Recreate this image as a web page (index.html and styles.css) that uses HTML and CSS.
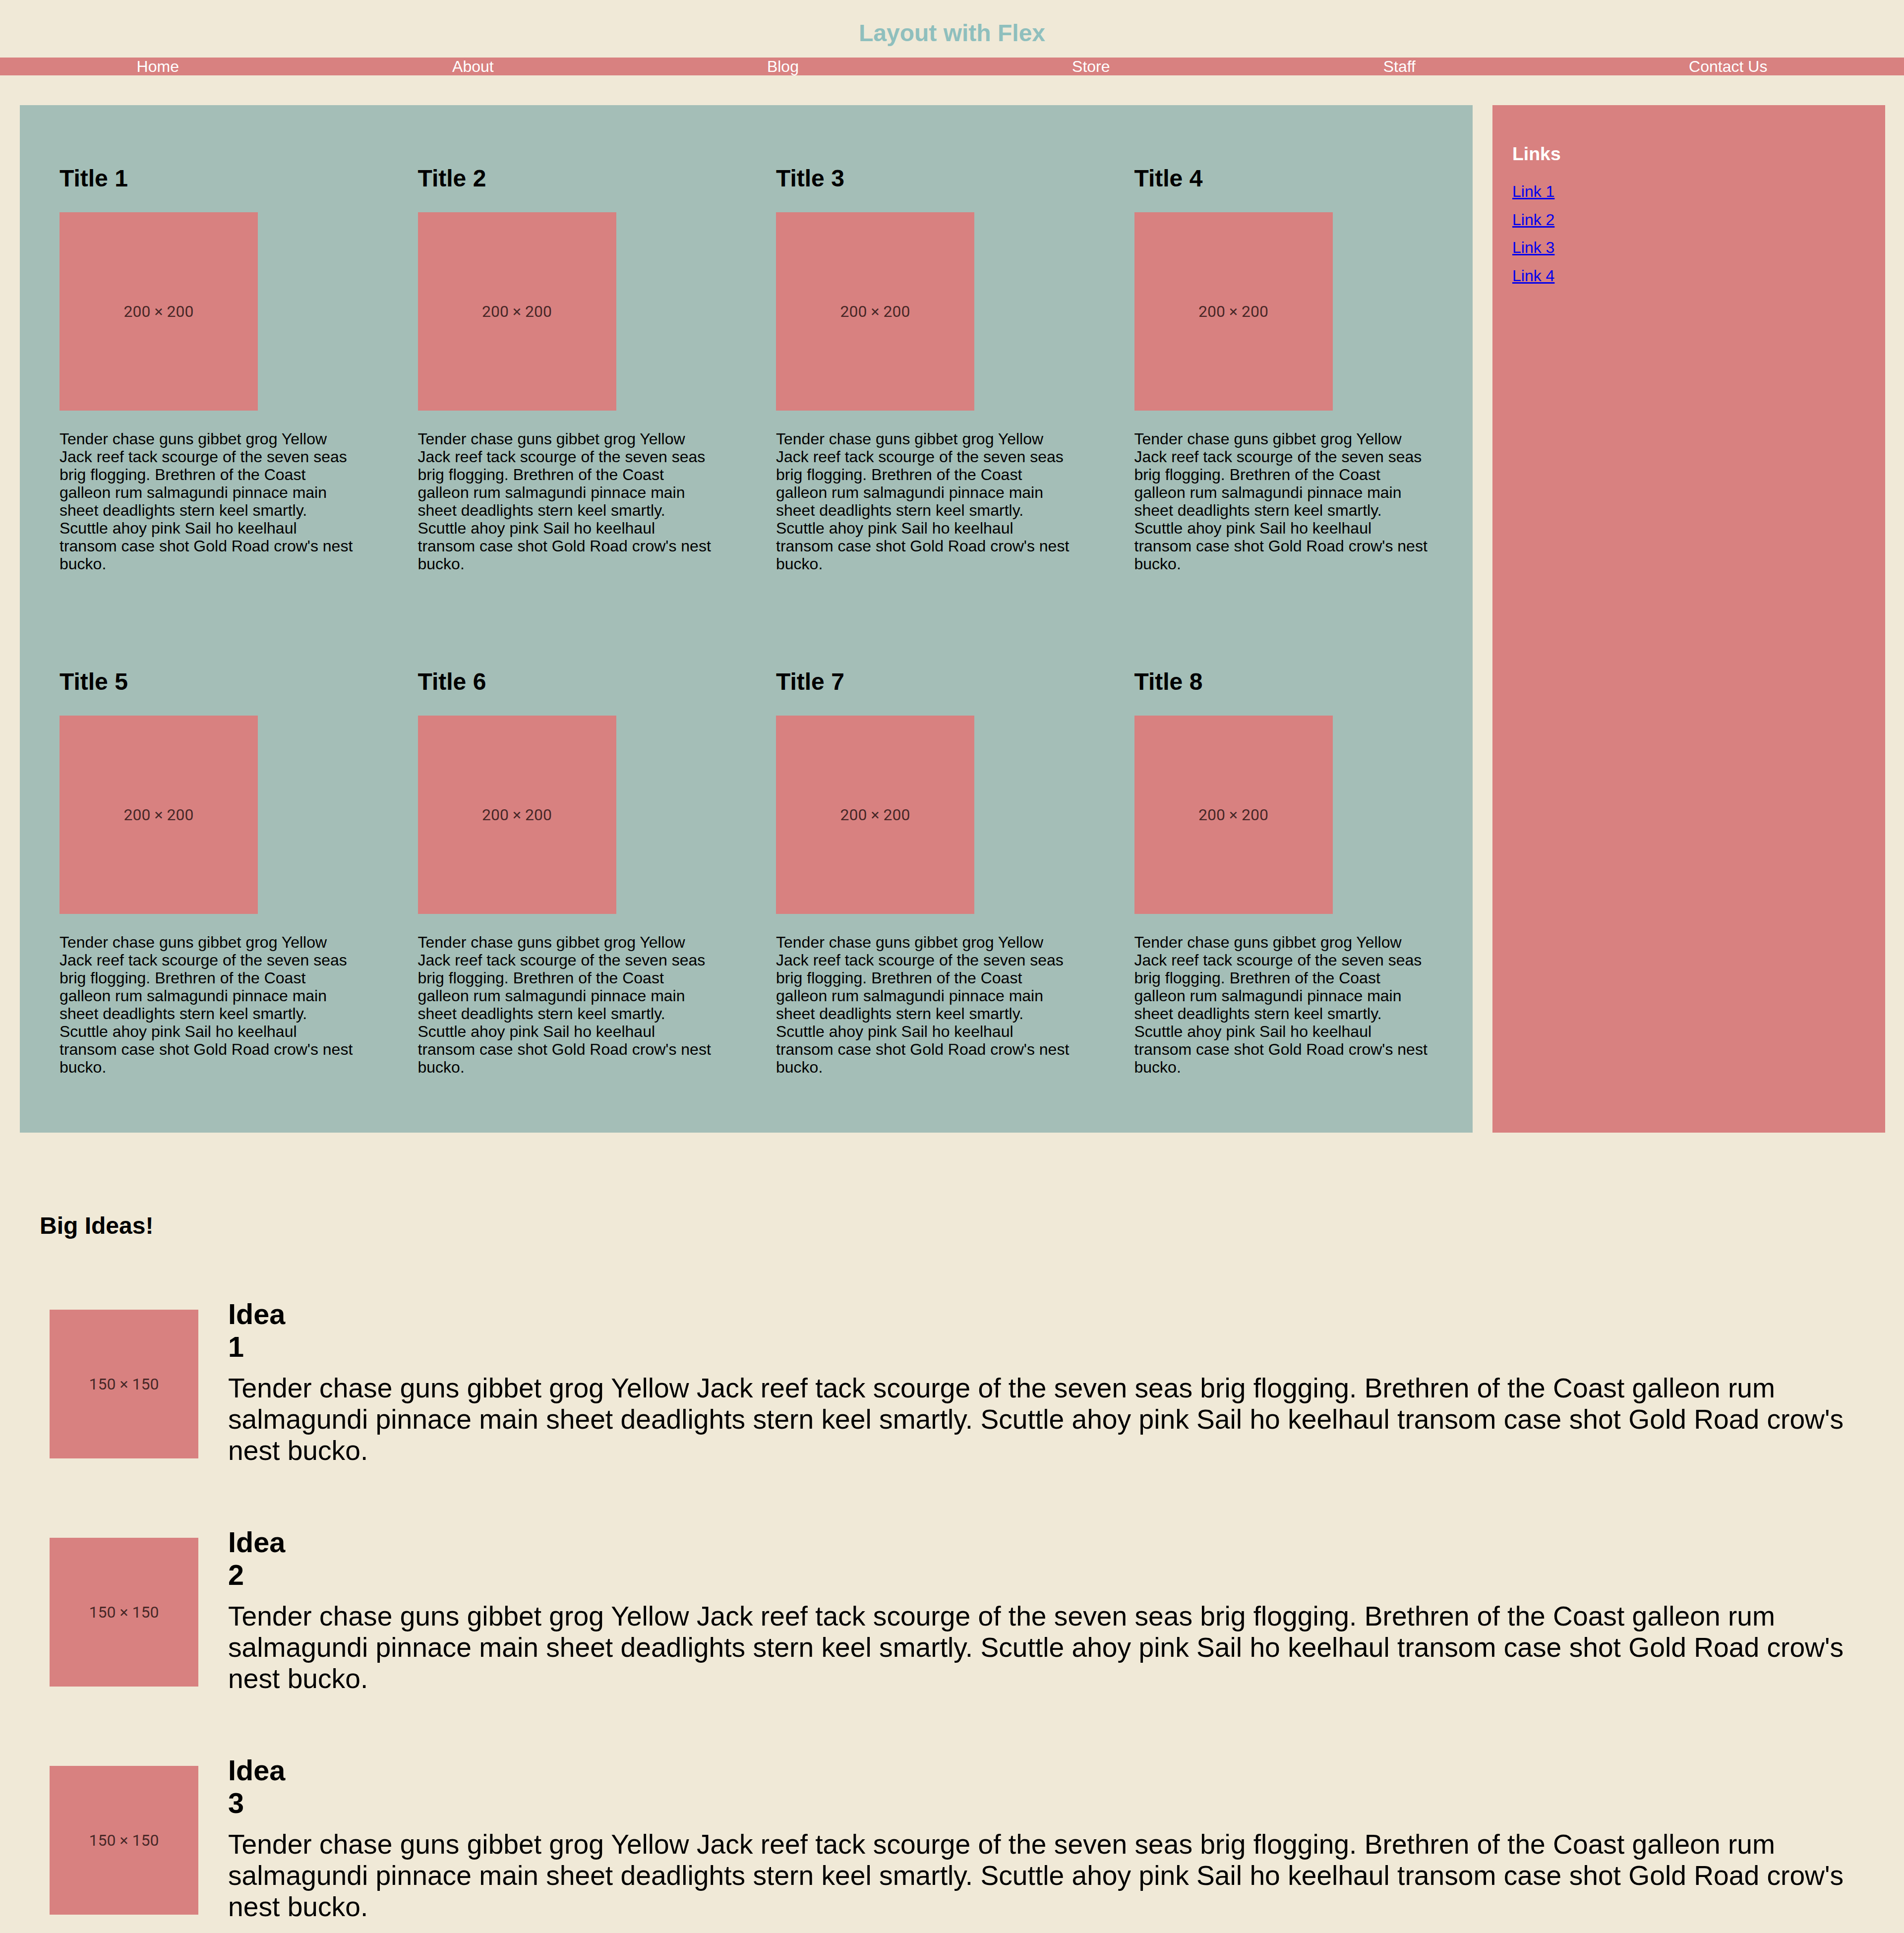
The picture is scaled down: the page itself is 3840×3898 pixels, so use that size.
FILE: index.html
```html
<!DOCTYPE html>
<html lang="en">
<head>
<meta charset="utf-8">
<title>Layout with Flex</title>
<link rel="stylesheet" href="styles.css">
</head>
<body>
<header class="site-header">
  <h1 class="site-title">Layout with Flex</h1>
  <nav class="main-nav">
    <a href="#">Home</a>
    <a href="#">About</a>
    <a href="#">Blog</a>
    <a href="#">Store</a>
    <a href="#">Staff</a>
    <a href="#">Contact Us</a>
  </nav>
</header>

<div class="main-row">
  <main class="cards">
    <article class="card">
      <h2 class="card-title">Title 1</h2>
      <div class="ph ph-200">200 × 200</div>
      <p class="card-text">Tender chase guns gibbet grog Yellow Jack reef tack scourge of the seven seas brig flogging. Brethren of the Coast galleon rum salmagundi pinnace main sheet deadlights stern keel smartly. Scuttle ahoy pink Sail ho keelhaul transom case shot Gold Road crow's nest bucko.</p>
    </article>
    <article class="card">
      <h2 class="card-title">Title 2</h2>
      <div class="ph ph-200">200 × 200</div>
      <p class="card-text">Tender chase guns gibbet grog Yellow Jack reef tack scourge of the seven seas brig flogging. Brethren of the Coast galleon rum salmagundi pinnace main sheet deadlights stern keel smartly. Scuttle ahoy pink Sail ho keelhaul transom case shot Gold Road crow's nest bucko.</p>
    </article>
    <article class="card">
      <h2 class="card-title">Title 3</h2>
      <div class="ph ph-200">200 × 200</div>
      <p class="card-text">Tender chase guns gibbet grog Yellow Jack reef tack scourge of the seven seas brig flogging. Brethren of the Coast galleon rum salmagundi pinnace main sheet deadlights stern keel smartly. Scuttle ahoy pink Sail ho keelhaul transom case shot Gold Road crow's nest bucko.</p>
    </article>
    <article class="card">
      <h2 class="card-title">Title 4</h2>
      <div class="ph ph-200">200 × 200</div>
      <p class="card-text">Tender chase guns gibbet grog Yellow Jack reef tack scourge of the seven seas brig flogging. Brethren of the Coast galleon rum salmagundi pinnace main sheet deadlights stern keel smartly. Scuttle ahoy pink Sail ho keelhaul transom case shot Gold Road crow's nest bucko.</p>
    </article>
    <article class="card">
      <h2 class="card-title">Title 5</h2>
      <div class="ph ph-200">200 × 200</div>
      <p class="card-text">Tender chase guns gibbet grog Yellow Jack reef tack scourge of the seven seas brig flogging. Brethren of the Coast galleon rum salmagundi pinnace main sheet deadlights stern keel smartly. Scuttle ahoy pink Sail ho keelhaul transom case shot Gold Road crow's nest bucko.</p>
    </article>
    <article class="card">
      <h2 class="card-title">Title 6</h2>
      <div class="ph ph-200">200 × 200</div>
      <p class="card-text">Tender chase guns gibbet grog Yellow Jack reef tack scourge of the seven seas brig flogging. Brethren of the Coast galleon rum salmagundi pinnace main sheet deadlights stern keel smartly. Scuttle ahoy pink Sail ho keelhaul transom case shot Gold Road crow's nest bucko.</p>
    </article>
    <article class="card">
      <h2 class="card-title">Title 7</h2>
      <div class="ph ph-200">200 × 200</div>
      <p class="card-text">Tender chase guns gibbet grog Yellow Jack reef tack scourge of the seven seas brig flogging. Brethren of the Coast galleon rum salmagundi pinnace main sheet deadlights stern keel smartly. Scuttle ahoy pink Sail ho keelhaul transom case shot Gold Road crow's nest bucko.</p>
    </article>
    <article class="card">
      <h2 class="card-title">Title 8</h2>
      <div class="ph ph-200">200 × 200</div>
      <p class="card-text">Tender chase guns gibbet grog Yellow Jack reef tack scourge of the seven seas brig flogging. Brethren of the Coast galleon rum salmagundi pinnace main sheet deadlights stern keel smartly. Scuttle ahoy pink Sail ho keelhaul transom case shot Gold Road crow's nest bucko.</p>
    </article>
  </main>
  <aside class="sidebar">
    <h3 class="sidebar-title">Links</h3>
    <ul class="link-list">
      <li><a href="#">Link 1</a></li>
      <li><a href="#">Link 2</a></li>
      <li><a href="#">Link 3</a></li>
      <li><a href="#">Link 4</a></li>
    </ul>
  </aside>
</div>

<section class="ideas">
  <h2 class="ideas-title">Big Ideas!</h2>
  <div class="idea">
    <div class="ph ph-150">150 × 150</div>
    <div class="idea-body">
      <h2 class="idea-title">Idea 1</h2>
      <p class="idea-text">Tender chase guns gibbet grog Yellow Jack reef tack scourge of the seven seas brig flogging. Brethren of the Coast galleon rum salmagundi pinnace main sheet deadlights stern keel smartly. Scuttle ahoy pink Sail ho keelhaul transom case shot Gold Road crow's nest bucko.</p>
    </div>
  </div>
  <div class="idea">
    <div class="ph ph-150">150 × 150</div>
    <div class="idea-body">
      <h2 class="idea-title">Idea 2</h2>
      <p class="idea-text">Tender chase guns gibbet grog Yellow Jack reef tack scourge of the seven seas brig flogging. Brethren of the Coast galleon rum salmagundi pinnace main sheet deadlights stern keel smartly. Scuttle ahoy pink Sail ho keelhaul transom case shot Gold Road crow's nest bucko.</p>
    </div>
  </div>
  <div class="idea">
    <div class="ph ph-150">150 × 150</div>
    <div class="idea-body">
      <h2 class="idea-title">Idea 3</h2>
      <p class="idea-text">Tender chase guns gibbet grog Yellow Jack reef tack scourge of the seven seas brig flogging. Brethren of the Coast galleon rum salmagundi pinnace main sheet deadlights stern keel smartly. Scuttle ahoy pink Sail ho keelhaul transom case shot Gold Road crow's nest bucko.</p>
    </div>
  </div>
</section>
</body>
</html>
```

FILE: styles.css
```css
html, body {
  margin: 0;
  padding: 0;
}

body {
  background: #f0e9d7;
  color: #000;
  font-family: "Liberation Sans", Arial, sans-serif;
  font-size: 32px;
}

/* header */
.site-title {
  margin: 0;
  padding: 39px 0 22px;
  font-size: 48px;
  line-height: 55px;
  font-weight: bold;
  text-align: center;
  color: #8fbfbd;
}

.main-nav {
  display: flex;
  justify-content: space-around;
  background: #d88180;
  height: 36px;
  line-height: 36px;
  font-size: 32px;
}

.main-nav a {
  color: #fff;
  text-decoration: none;
}

/* main row */
.main-row {
  display: flex;
  align-items: stretch;
  gap: 40px;
  padding: 0 38px 0 40px;
  margin-top: 60px;
}

.cards {
  flex: 1;
  display: grid;
  grid-template-columns: repeat(4, 1fr);
  background: #a4beb7;
  padding: 20px 20px 22px;
}

.card {
  padding: 60px 66px 60px 60px;
}

.card-title {
  margin: 40px 0 41px;
  font-size: 48px;
  line-height: 55px;
  font-weight: bold;
}

.ph {
  display: flex;
  align-items: center;
  justify-content: center;
  background: #d88180;
  color: rgba(45, 22, 22, 0.85);
  font-family: Roboto, "Noto Sans", sans-serif;
  font-size: 32px;
  flex-shrink: 0;
}

.ph-200 {
  width: 400px;
  height: 400px;
}

.ph-150 {
  width: 300px;
  height: 300px;
}

.card-text {
  margin: 39px 0 32px;
  font-size: 32px;
  line-height: 36px;
}

.sidebar {
  width: 792px;
  flex-shrink: 0;
  background: #d88180;
  padding: 40px;
  box-sizing: border-box;
}

.sidebar-title {
  margin: 37px 0 26px;
  font-size: 37.44px;
  line-height: 43px;
  font-weight: bold;
  color: #fff;
}

.link-list {
  list-style: none;
  margin: 0;
  padding: 0;
}

.link-list li {
  line-height: 56.5px;
  font-size: 32px;
}

.link-list a {
  color: #0000ee;
  text-decoration: underline;
}

/* ideas */
.ideas {
  padding: 0 80px;
  margin-top: 160px;
}

.ideas-title {
  margin: 0 0 58px;
  font-size: 48px;
  line-height: 55px;
  font-weight: bold;
}

.idea {
  display: flex;
  align-items: center;
  padding: 60px 0 52px 20px;
}

.idea .ph-150 {
  margin-right: 60px;
}

.idea-body {
  flex: 1;
  padding-bottom: 8px;
}

.idea-title {
  width: min-content;
  margin: 0;
  font-size: 57.6px;
  line-height: 66px;
  font-weight: bold;
}

.idea-text {
  margin: 19px 0 0;
  font-size: 55.2px;
  line-height: 63px;
}
```
